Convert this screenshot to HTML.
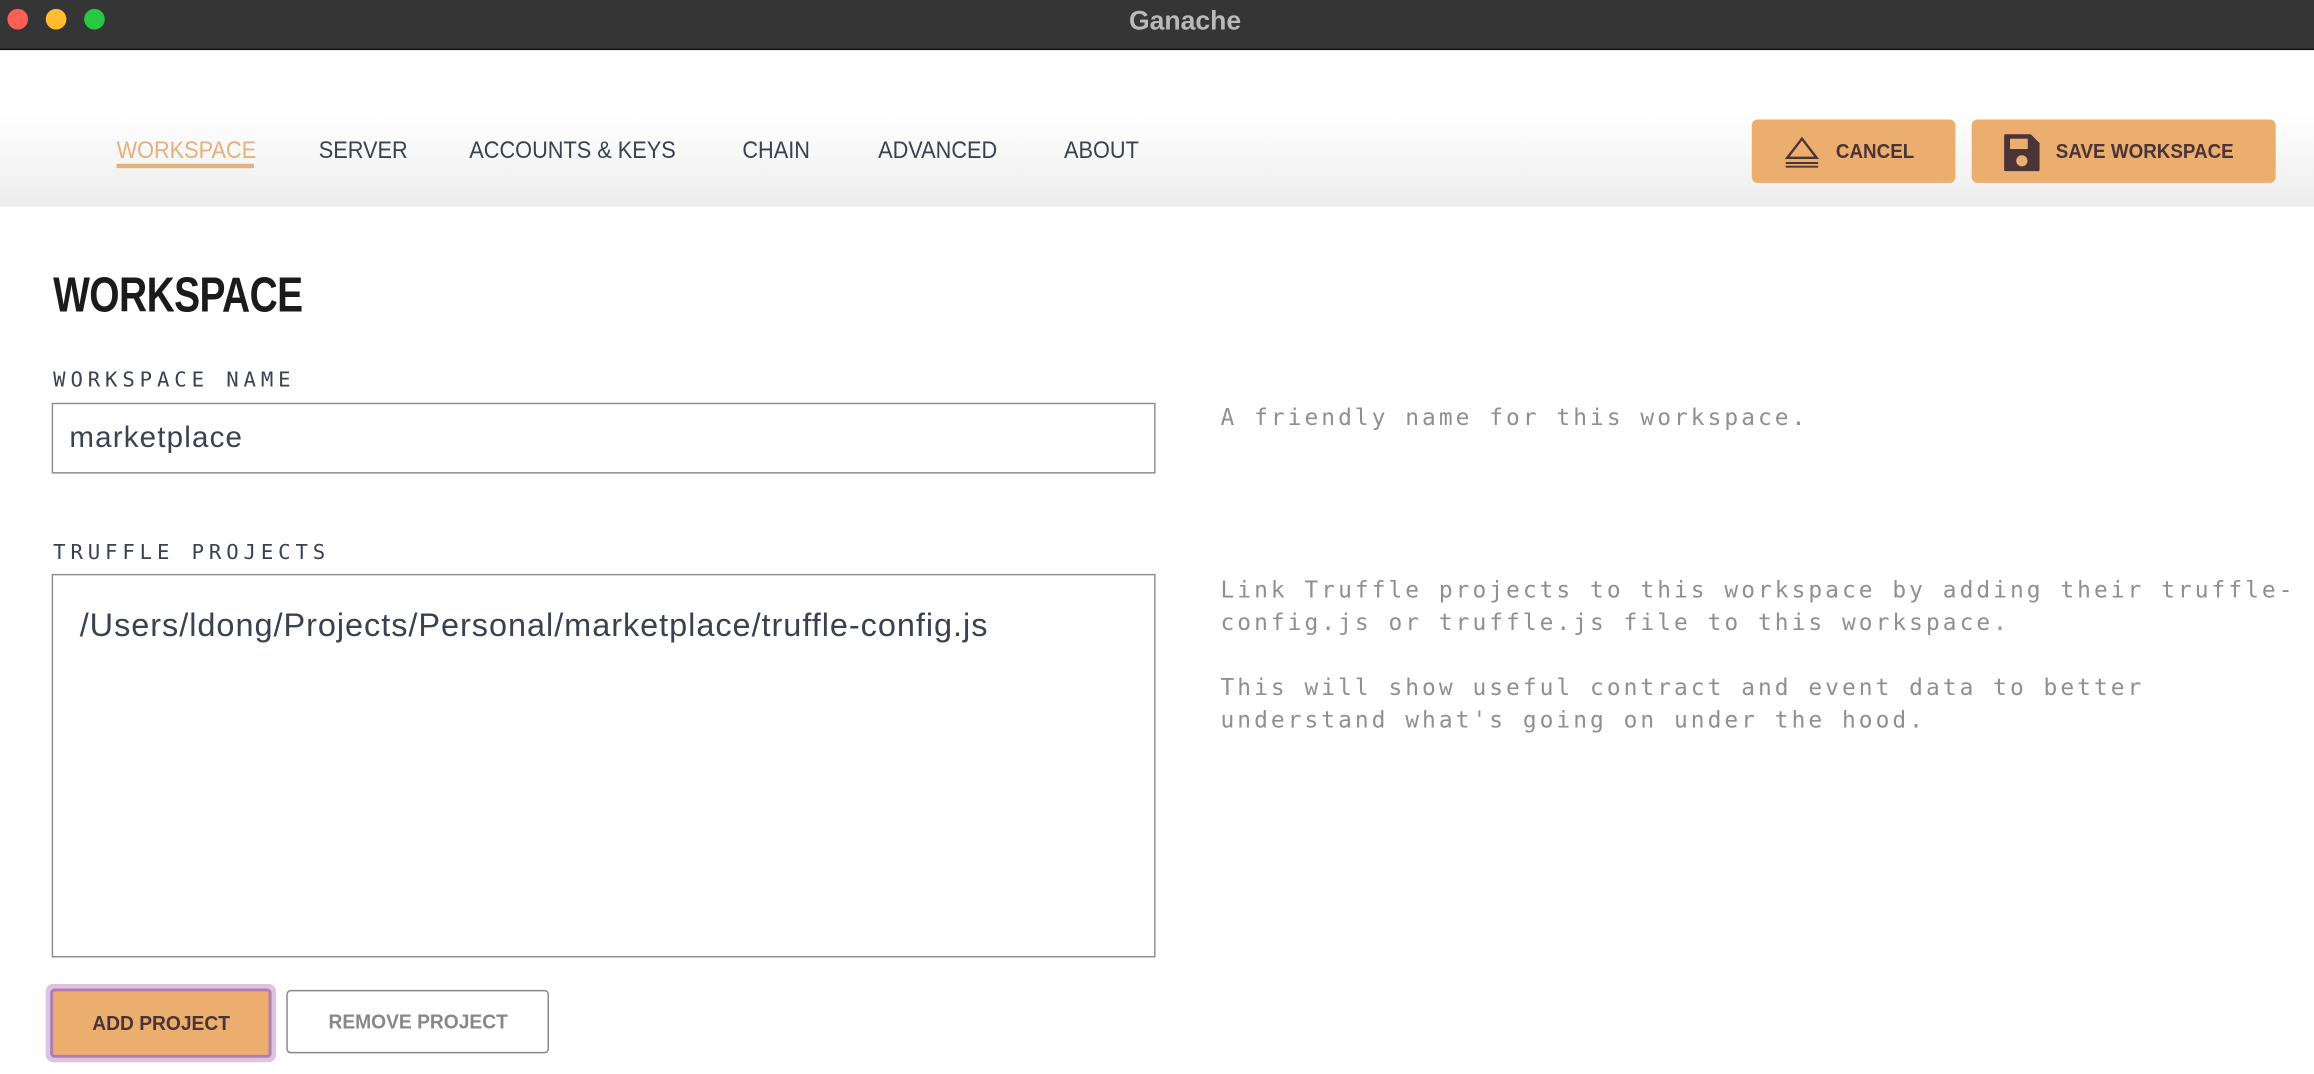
<!DOCTYPE html>
<html><head><meta charset="utf-8"><style>
html,body{margin:0;padding:0;width:2314px;height:1074px;overflow:hidden;background:#fff}
#w{position:absolute;left:0;top:0;width:1568px;height:728px;transform:scale(1.4758,1.4753);transform-origin:0 0;font-family:"Liberation Sans",sans-serif}
.a{position:absolute;white-space:nowrap}
#tb{left:0;top:0;width:1568px;height:33px;background:#353535;border-bottom:1px solid #111}
.dot{position:absolute;top:6px;width:14px;height:14px;border-radius:50%}
#hd{left:0;top:34px;width:1568px;height:106px;background:linear-gradient(#fff 0%,#fff 40%,#ededed 100%)}
.nav{top:94px;font-size:16px;color:#3b4150;transform:scaleX(0.92);transform-origin:0 0}
.btn{position:absolute;background:#ecae6f;border-radius:4px;color:#4a3438;font-weight:bold;font-size:14px}
.sx{display:inline-block;transform:scaleX(0.91);transform-origin:0 0}
.help{font-family:"DejaVu Sans Mono","Liberation Mono",monospace;color:#8f8f8f;font-size:15.5px;line-height:22px;left:827px;letter-spacing:2.05px}
.lbl{font-family:"DejaVu Sans Mono","Liberation Mono",monospace;font-size:14px;color:#3b4150;letter-spacing:3.3px;left:36px}
.box{position:absolute;border:1.5px solid #8e8e8e;background:#fff;box-sizing:border-box}
</style></head><body><div id="w">
<div class="a" id="tb"></div>
<div class="dot" style="left:5px;background:#fe5f57"></div>
<div class="dot" style="left:31px;background:#febc2e"></div>
<div class="dot" style="left:57px;background:#28c840"></div>
<div class="a" style="left:703px;width:200px;top:4px;text-align:center;color:#b9b9b9;font-weight:bold;font-size:18px">Ganache</div>
<div class="a" id="hd"></div>
<div class="a nav" style="left:79px;color:#e4b07c">WORKSPACE</div>
<div class="a" style="left:79px;top:111px;width:93px;height:3px;background:#e4b07c"></div>
<div class="a nav" style="left:216px">SERVER</div>
<div class="a nav" style="left:318px">ACCOUNTS &amp; KEYS</div>
<div class="a nav" style="left:503px">CHAIN</div>
<div class="a nav" style="left:595px">ADVANCED</div>
<div class="a nav" style="left:721px">ABOUT</div>
<div class="btn" style="left:1187px;top:81px;width:138px;height:43px">
<svg style="position:absolute;left:21px;top:11px" width="26" height="22" viewBox="0 0 26 22"><path d="M13 2 L23 15 L3 15 Z" fill="none" stroke="#4a3438" stroke-width="1.6"/><path d="M2 18.5H24M2 21H24" stroke="#4a3438" stroke-width="1.3"/></svg>
<span class="a sx" style="left:57px;top:13px">CANCEL</span></div>
<div class="btn" style="left:1336px;top:81px;width:206px;height:43px">
<svg style="position:absolute;left:21px;top:9px" width="26" height="27" viewBox="0 0 26 27"><path d="M1 2 Q1 1 2 1 H19 L25 7 V25 Q25 26 24 26 H2 Q1 26 1 25 Z" fill="#4a3438"/><rect x="5" y="4" width="12" height="7" fill="#ecae6f"/><circle cx="13" cy="19" r="3.8" fill="#ecae6f"/></svg>
<span class="a sx" style="left:57px;top:13px">SAVE WORKSPACE</span></div>
<div class="a" style="left:36px;top:181px;font-size:33px;font-weight:bold;color:#1b1b1b;transform:scaleX(0.8);transform-origin:0 0;letter-spacing:-0.5px">WORKSPACE</div>
<div class="a lbl" style="top:250px">WORKSPACE NAME</div>
<div class="box" style="left:35px;top:273px;width:748px;height:48px"></div>
<div class="a" style="left:47px;top:286px;font-size:20px;color:#3b4150;letter-spacing:0.8px">marketplace</div>
<div class="a help" style="top:272px">A friendly name for this workspace.</div>
<div class="a lbl" style="top:367px">TRUFFLE PROJECTS</div>
<div class="box" style="left:35px;top:389px;width:748px;height:260px"></div>
<div class="a" style="left:54px;top:411px;font-size:22px;color:#3b4150;letter-spacing:0.65px">/Users/ldong/Projects/Personal/marketplace/truffle-config.js</div>
<div class="a help" style="top:389px">Link Truffle projects to this workspace by adding their truffle-<br>config.js or truffle.js file to this workspace.<br><br>This will show useful contract and event data to better<br>understand what's going on under the hood.</div>
<div class="a" style="left:31px;top:667px;width:156px;height:53px;border-radius:5px;background:#dcc3df"></div>
<div class="btn" style="left:34px;top:670px;width:150px;height:47px;border:2px solid #b27bb2;box-sizing:border-box;border-radius:3px;text-align:center;line-height:43px"><span style="display:inline-block;transform:scaleX(0.93)">ADD PROJECT</span></div>
<div class="a" style="left:194px;top:671px;width:178px;height:43px;border:1.5px solid #888;border-radius:3px;box-sizing:border-box;text-align:center;line-height:40px;font-weight:bold;font-size:14px;color:#888"><span style="display:inline-block;transform:scaleX(0.93)">REMOVE PROJECT</span></div>
</div></body></html>
